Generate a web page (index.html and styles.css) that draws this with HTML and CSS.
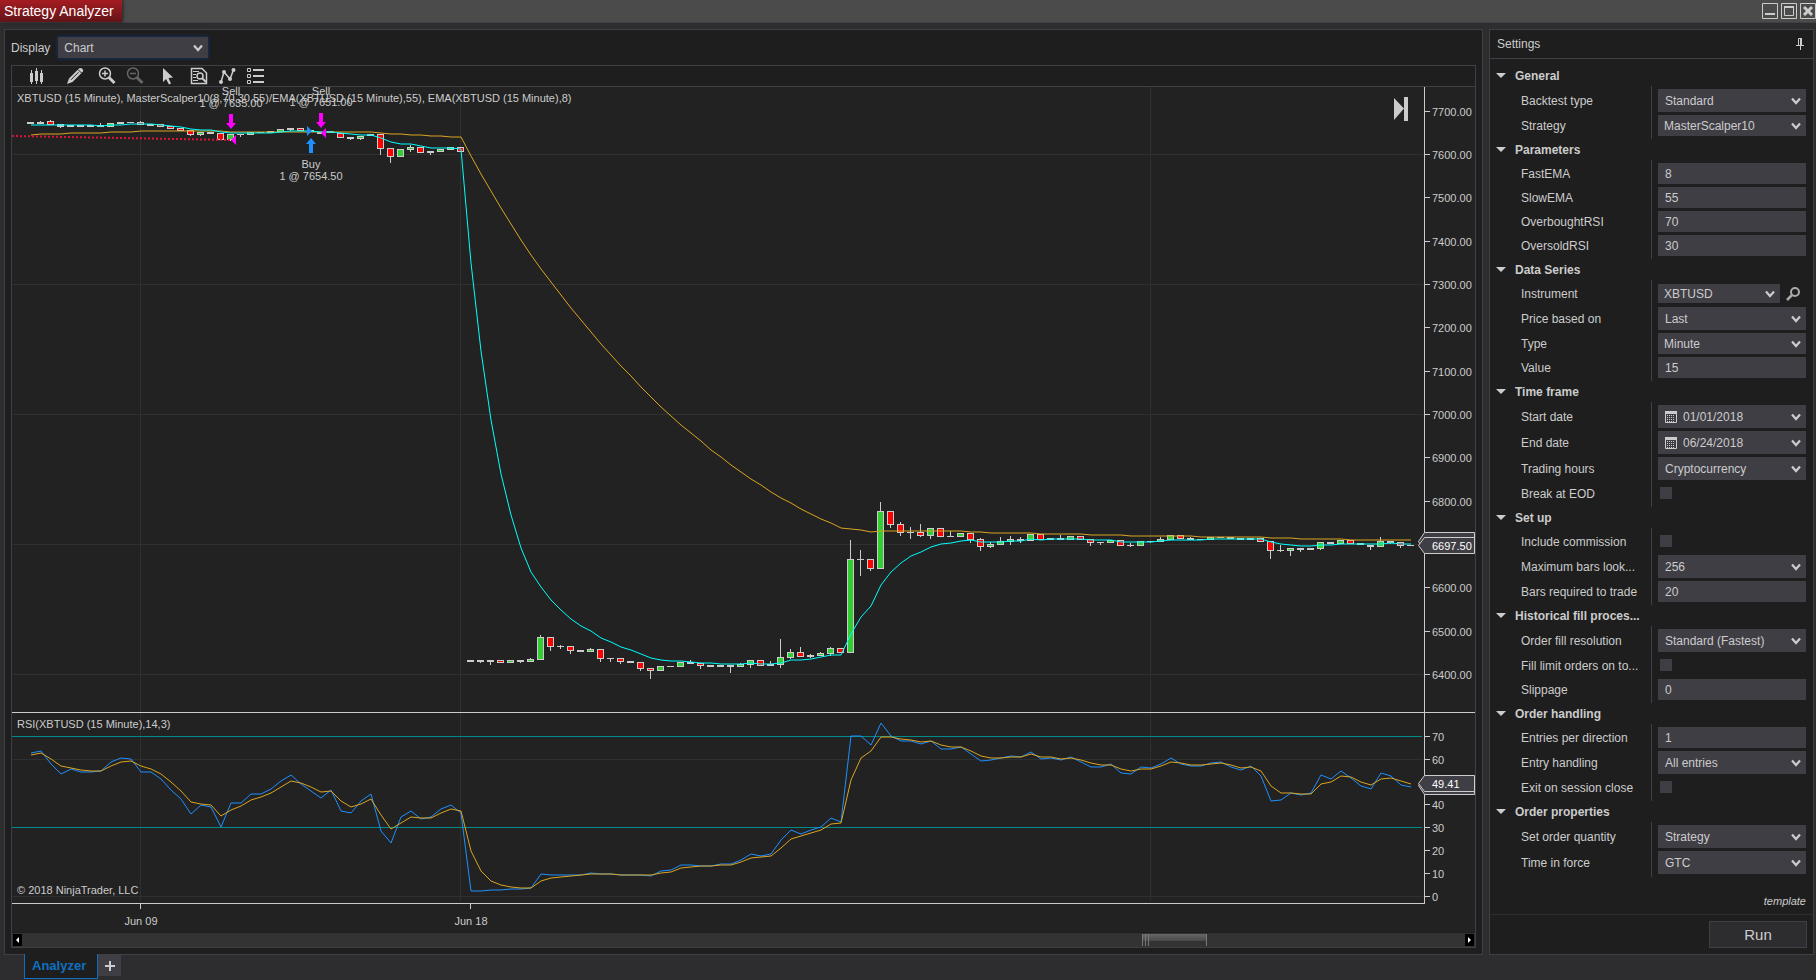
FILE: index.html
```
<!DOCTYPE html>
<html lang="en">
<head>
    <meta charset="UTF-8">
    <title>Strategy Analyzer</title>
    <link rel="stylesheet" href="styles.css">
</head>
<body>
<svg class="defs" aria-hidden="true">
    <symbol id="chev" viewBox="0 0 10 8"><path d="M1 1.5 L5 6 L9 1.5" fill="none" stroke="#ccc" stroke-width="2.2"/></symbol>
    <symbol id="cal" viewBox="0 0 12 12"><path d="M.5.5H11.5V11.5H.5Z" fill="none" stroke="#ccc"/><path d="M0 1.500H12" stroke="#ccc" stroke-width="3"/><path d="M2 4.500H10M2 6.500H10M2 8.500H10M2 10.500H10" stroke="#ccc" stroke-dasharray="1 1"/></symbol>
</svg>

<div class="titlebar">
    <h1>Strategy Analyzer</h1>
    <div class="win-buttons">
        <button type="button" aria-label="Minimize"><svg viewBox="0 0 16 16"><path d="M.5.5H15.5V15.5H.5Z" fill="none" stroke="#ccc"/><path d="M3 11H13" stroke="#ccc" stroke-width="2"/></svg></button>
        <button type="button" aria-label="Maximize"><svg viewBox="0 0 16 16"><path d="M.5.5H15.5V15.5H.5Z" fill="none" stroke="#ccc"/><path d="M3.5 3.5H12.5V12.5H3.5Z" fill="none" stroke="#ccc"/><path d="M3 4H13" stroke="#ccc" stroke-width="2"/></svg></button>
        <button type="button" aria-label="Close"><svg viewBox="0 0 16 16"><path d="M.5.5H15.5V15.5H.5Z" fill="none" stroke="#ccc"/><path d="M4 4L12 12M12 4L4 12" stroke="#ccc" stroke-width="3"/></svg></button>
    </div>
</div>

<div class="content">
    <div class="panel analyzer">
        <div class="display-row">
            <label for="display">Display</label>
            <div class="pick focus"><select id="display"><option>Chart</option></select><svg><use href="#chev"/></svg></div>
        </div>
        <div class="chart-frame">
            <div class="toolbar">
                <div class="group first">
                    <button type="button" aria-label="Bars"><svg viewBox="0 0 18 18"><path d="M3.500 3V17M8.500 1V17M13.500 3V17" stroke="#ccc"/><path d="M2 6H5V15H2ZM7 4H10V14H7ZM12 6H15V15H12Z" fill="#ccc"/></svg></button>
                </div>
                <div class="group">
                    <button type="button" aria-label="Draw"><svg viewBox="0 0 18 18"><path d="M1 17L3 11.500L12.500 2Q14.500 0 16.500 2Q18 4 16 5.500L6.500 15Z" fill="#ccc"/><path d="M5 12.800L12.500 5.300M12 2.500L15.500 6" stroke="#1e1e1e" fill="none"/></svg></button>
                </div>
                <div class="group">
                    <button type="button" aria-label="Zoom in"><svg viewBox="0 0 18 18"><circle cx="7" cy="6.500" r="5.500" fill="none" stroke="#ccc" stroke-width="1.500"/><path d="M4 6.500H10M7 3.500V9.500" stroke="#ccc" stroke-width="1.500"/><path d="M11 10.500L16.500 16" stroke="#ccc" stroke-width="3"/></svg></button>
                    <button type="button" aria-label="Zoom out" disabled><svg viewBox="0 0 18 18"><circle cx="7" cy="6.500" r="5.500" fill="none" stroke="#666" stroke-width="1.500"/><path d="M4 6.500H10" stroke="#666" stroke-width="1.500"/><path d="M11 10.500L16.500 16" stroke="#666" stroke-width="3"/></svg></button>
                </div>
                <div class="group">
                    <button type="button" aria-label="Pointer"><svg viewBox="0 0 18 18"><path d="M5 1V15L8 12L11 17.500L13 16.500L10.500 11L15 10.500Z" fill="#ccc"/></svg></button>
                </div>
                <div class="group">
                    <button type="button" aria-label="Data box"><svg viewBox="0 0 18 18"><path d="M1.500 1.500H12L16.500 6V16.500H1.500Z" fill="none" stroke="#ccc" stroke-width="1.500"/><path d="M3 4.500H9M3 7.500H6M3 10.500H6M3 13.500H8" stroke="#ccc"/><circle cx="10" cy="9" r="3" fill="none" stroke="#ccc" stroke-width="1.500"/><path d="M12 11L16 15" stroke="#ccc" stroke-width="2"/></svg></button>
                    <button type="button" aria-label="Indicators"><svg viewBox="0 0 18 18"><path d="M3 15L6 5L12 12L15.500 3" fill="none" stroke="#ccc" stroke-width="1.500"/><g fill="#ccc"><circle cx="3" cy="15" r="2"/><circle cx="6" cy="5" r="2"/><circle cx="12" cy="12" r="2"/><circle cx="15.500" cy="3" r="2"/></g></svg></button>
                    <button type="button" aria-label="Properties"><svg viewBox="0 0 18 18"><path d="M1.500 1.500H4.500V4.500H1.500ZM1.500 7.500H4.500V10.500H1.500ZM1.500 13.500H4.500V16.500H1.500Z" fill="none" stroke="#ccc"/><path d="M7 3H18M7 9H18M7 15H18" stroke="#ccc" stroke-width="2"/></svg></button>
                </div>
            </div>
            <svg id="chart" class="chart" viewBox="12 87 1463 845">
                <g id="grid"></g>
                <g id="candles"></g>
                <g id="lines"></g>
                <g id="axes"></g>
                <path d="M12 136L231 140" stroke="#dc143c" stroke-width="2" stroke-dasharray="2 2"/>
                <g fill="#f0f">
                    <path d="M229 114H233V123H236L231 129L226 123H229Z"/>
                    <path d="M319 113H323V122H326L321 128L316 122H319Z"/>
                    <path d="M236 135V145L231 140Z"/>
                    <path d="M326 128V138L321 133Z"/>
                </g>
                <g fill="#1e90ff">
                    <path d="M309 153H313V144H316L311 138L306 144H309Z"/>
                    <path d="M307 126V136L312 131Z"/>
                </g>
                <g class="chart-text">
                    <text x="17" y="102">XBTUSD (15 Minute), MasterScalper10(8,70,30,55)/EMA(XBTUSD (15 Minute),55), EMA(XBTUSD (15 Minute),8)</text>
                    <g text-anchor="middle">
                        <text x="231" y="95">Sell</text>
                        <text x="231" y="107">1 @ 7635.00</text>
                        <text x="321" y="95">Sell</text>
                        <text x="321" y="106">1 @ 7651.00</text>
                        <text x="311" y="168">Buy</text>
                        <text x="311" y="180">1 @ 7654.50</text>
                        <text x="141" y="925">Jun 09</text>
                        <text x="471" y="925">Jun 18</text>
                    </g>
                    <text x="17" y="728">RSI(XBTUSD (15 Minute),14,3)</text>
                    <text x="17" y="894">© 2018 NinjaTrader, LLC</text>
                </g>
                <path d="M1394 98L1404 108.500L1394 120ZM1404 97H1408V121H1404Z" fill="#ccc"/>
                <g fill="#3f3e45" stroke="#ccc">
                    <path d="M1418.500 541.500L1424.500 532.500H1474.500V551.500H1424.500Z"/>
                    <path d="M1418.500 545.500L1424.500 537.500H1474.500V553.500H1424.500Z"/>
                    <path d="M1418.500 785.500L1424.500 777.500H1474.500V794.500H1424.500Z"/>
                    <path d="M1418.500 783.500L1424.500 775.500H1474.500V791.500H1424.500Z"/>
                </g>
                <g class="chart-text marker">
                    <text x="1432" y="550">6697.50</text>
                    <text x="1432" y="788">49.41</text>
                </g>
            </svg>
            <div class="scrollbar">
                <button type="button" aria-label="Scroll left"><svg viewBox="0 0 9 12"><path d="M6 3V9L3 6Z" fill="#fff"/></svg></button>
                <div class="track"><div class="thumb"></div></div>
                <button type="button" aria-label="Scroll right"><svg viewBox="0 0 9 12"><path d="M3 3V9L6 6Z" fill="#fff"/></svg></button>
            </div>
        </div>
    </div>

    <div class="panel settings">
        <div class="settings-title"><h2>Settings</h2>
            <button type="button" aria-label="Pin"><svg viewBox="0 0 8 12"><path d="M2.500 7V.5H5.500V7M0 7.500H8M4.500 8V12" fill="none" stroke="#ccc"/><path d="M5 0V7" stroke="#ccc" stroke-width="2"/></svg></button>
        </div>
        <form class="settings-list">
            <h3>General</h3>
            <div class="rows">
                <div class="row"><label for="backtest">Backtest type</label><div class="pick tall"><select id="backtest"><option>Standard</option></select><svg><use href="#chev"/></svg></div></div>
                <div class="row"><label for="strategy">Strategy</label><div class="pick slim"><select id="strategy"><option>MasterScalper10</option></select><svg><use href="#chev"/></svg></div></div>
            </div>
            <h3>Parameters</h3>
            <div class="rows">
                <div class="row"><label for="fast">FastEMA</label><input type="text" id="fast" value="8"></div>
                <div class="row"><label for="slow">SlowEMA</label><input type="text" id="slow" value="55"></div>
                <div class="row"><label for="overbought">OverboughtRSI</label><input type="text" id="overbought" value="70"></div>
                <div class="row"><label for="oversold">OversoldRSI</label><input type="text" id="oversold" value="30"></div>
            </div>
            <h3>Data Series</h3>
            <div class="rows">
                <div class="row"><label for="instrument">Instrument</label>
                    <div class="instrument">
                        <div class="pick slim"><select id="instrument"><option>XBTUSD</option></select><svg><use href="#chev"/></svg></div>
                        <button type="button" aria-label="Find instrument"><svg viewBox="0 0 14 14"><circle cx="9" cy="5" r="4" fill="none" stroke="#aaa" stroke-width="2"/><path d="M6 8L1 13" stroke="#aaa" stroke-width="2.500"/></svg></button>
                    </div>
                </div>
                <div class="row"><label for="price">Price based on</label><div class="pick tall"><select id="price"><option>Last</option></select><svg><use href="#chev"/></svg></div></div>
                <div class="row"><label for="type">Type</label><div class="pick slim"><select id="type"><option>Minute</option></select><svg><use href="#chev"/></svg></div></div>
                <div class="row"><label for="value">Value</label><input type="text" id="value" value="15"></div>
            </div>
            <h3>Time frame</h3>
            <div class="rows">
                <div class="row"><label for="start">Start date</label><div class="pick tall date"><svg class="cal"><use href="#cal"/></svg><select id="start"><option>01/01/2018</option></select><svg><use href="#chev"/></svg></div></div>
                <div class="row"><label for="end">End date</label><div class="pick tall date"><svg class="cal"><use href="#cal"/></svg><select id="end"><option>06/24/2018</option></select><svg><use href="#chev"/></svg></div></div>
                <div class="row"><label for="hours">Trading hours</label><div class="pick tall"><select id="hours"><option>Cryptocurrency</option></select><svg><use href="#chev"/></svg></div></div>
                <div class="row"><label for="eod">Break at EOD</label><input type="checkbox" id="eod"></div>
            </div>
            <h3>Set up</h3>
            <div class="rows">
                <div class="row"><label for="commission">Include commission</label><input type="checkbox" id="commission"></div>
                <div class="row"><label for="lookback">Maximum bars look...</label><div class="pick tall"><select id="lookback"><option>256</option></select><svg><use href="#chev"/></svg></div></div>
                <div class="row"><label for="required">Bars required to trade</label><input type="text" id="required" value="20"></div>
            </div>
            <h3>Historical fill proces...</h3>
            <div class="rows">
                <div class="row"><label for="resolution">Order fill resolution</label><div class="pick tall"><select id="resolution"><option>Standard (Fastest)</option></select><svg><use href="#chev"/></svg></div></div>
                <div class="row"><label for="limit">Fill limit orders on to...</label><input type="checkbox" id="limit"></div>
                <div class="row"><label for="slippage">Slippage</label><input type="text" id="slippage" value="0"></div>
            </div>
            <h3>Order handling</h3>
            <div class="rows">
                <div class="row"><label for="entries">Entries per direction</label><input type="text" id="entries" value="1"></div>
                <div class="row"><label for="handling">Entry handling</label><div class="pick tall"><select id="handling"><option>All entries</option></select><svg><use href="#chev"/></svg></div></div>
                <div class="row"><label for="exit">Exit on session close</label><input type="checkbox" id="exit"></div>
            </div>
            <h3>Order properties</h3>
            <div class="rows">
                <div class="row"><label for="quantity">Set order quantity</label><div class="pick tall"><select id="quantity"><option>Strategy</option></select><svg><use href="#chev"/></svg></div></div>
                <div class="row"><label for="tif">Time in force</label><div class="pick tall"><select id="tif"><option>GTC</option></select><svg><use href="#chev"/></svg></div></div>
            </div>
            <a href="#" class="template">template</a>
        </form>
        <div class="run-bar"><button type="button">Run</button></div>
    </div>
</div>

<div class="tabs">
    <a href="#" class="tab">Analyzer</a>
    <button type="button" aria-label="New tab"><svg viewBox="0 0 10 10"><path d="M5 0V10M0 5H10" stroke="#ccc" stroke-width="2"/></svg></button>
</div>
<script src="chart.js"></script>
</body>
</html>
```

FILE: styles.css
```
* {
    box-sizing: border-box;
}
body {
    margin: 0;
    min-height: 100vh;
    display: flex;
    flex-direction: column;
    background: #2d2d30;
    color: #ccc;
    font-family: "Liberation Sans", Arial, sans-serif;
    font-size: 12px;
}
h1, h2, h3 {
    margin: 0;
    font-weight: normal;
}
button {
    padding: 0;
    border: 0;
    background: none;
    color: inherit;
    font-family: inherit;
}
svg {
    display: block;
}
.defs {
    position: absolute;
    width: 0;
    height: 0;
}

/* title bar */
.titlebar {
    display: flex;
    justify-content: space-between;
    height: 23px;
    background: #4b4b4b;
    border-bottom: 1px solid #3f3f46;
}
.titlebar h1 {
    padding: 0 8px 0 4px;
    font-size: 14px;
    line-height: 22px;
    color: #fff;
    background: linear-gradient(#a51c22, #631418);
    box-shadow: 1px 0 3px #222;
}
.win-buttons {
    display: flex;
    align-items: flex-start;
    gap: 3px;
    padding-top: 3px;
}
.win-buttons svg {
    width: 16px;
    height: 16px;
}

/* layout */
.content {
    flex: 1;
    display: grid;
    grid-template-columns: minmax(0, 1fr) 325px;
    gap: 6px;
    padding: 6px 2px 0 4px;
}
.panel {
    display: flex;
    flex-direction: column;
    background: #1e1e1e;
    border: 1px solid #3f3f46;
}
.analyzer {
    padding: 0 6px 6px;
}
.display-row {
    display: flex;
    align-items: center;
    gap: 8px;
    height: 35px;
}
.display-row .pick {
    width: 150px;
}

/* drop-downs and inputs */
.pick {
    position: relative;
    height: 21px;
    background: #3f3e45;
}
.pick.tall {
    height: 23px;
}
.pick.focus {
    box-shadow: 0 0 4px #0e3a7a;
}
.pick select {
    appearance: none;
    width: 100%;
    height: 100%;
    padding: 0 20px 0 6px;
    border: 0;
    background: none;
    color: #ccc;
    font-family: inherit;
    font-size: 12px;
}
.pick.tall select {
    padding-left: 7px;
}
.pick.date select {
    padding-left: 25px;
}
.pick svg {
    position: absolute;
    right: 5px;
    top: 0;
    bottom: 0;
    margin: auto;
    width: 10px;
    height: 8px;
    pointer-events: none;
}
.pick svg.cal {
    left: 7px;
    right: auto;
    width: 12px;
    height: 12px;
}
input[type=text] {
    width: 100%;
    height: 21px;
    padding: 0 7px;
    border: 0;
    background: #3f3e45;
    color: #ccc;
    font-family: inherit;
    font-size: 12px;
}
input[type=checkbox] {
    appearance: none;
    width: 12px;
    height: 12px;
    margin: 4px 2px 5px;
    background: #3f3e45;
}

/* chart */
.chart-frame {
    flex: 1;
    display: flex;
    flex-direction: column;
    border: 1px solid #3f3f46;
    background: #222;
}
.toolbar {
    display: flex;
    gap: 14px;
    height: 21px;
    padding-left: 13px;
    align-items: center;
    background: #1e1e1e;
    border-bottom: 1px solid #3f3f46;
}
.toolbar .group {
    display: flex;
    gap: 10px;
}
.toolbar .first {
    padding: 0 6px 0 3px;
}
.toolbar svg {
    width: 18px;
    height: 18px;
}
.chart {
    flex: 1;
    width: 100%;
    min-height: 0;
}
.chart-text {
    fill: #ccc;
    font-size: 11px;
}
.marker {
    fill: #fff;
}
.scrollbar {
    display: flex;
    height: 15px;
    padding: 1px;
    background: #333;
    border-top: 1px solid #1e1e1e;
}
.scrollbar button {
    background: #000;
}
.scrollbar button svg {
    width: 9px;
    height: 12px;
}
.track {
    flex: 1;
}
.thumb {
    width: 4.5%;
    height: 100%;
    margin-left: 77.6%;
    border: 1px solid #777;
    border-width: 0 1px;
    background: linear-gradient(90deg, transparent 2px, #777 2px, #777 3px, transparent 3px, transparent 5px, #777 5px, #777 6px, transparent 6px), linear-gradient(#666, #4b4b4b 55%, #333 55%);
}

/* settings */
.settings-title {
    display: flex;
    justify-content: space-between;
    align-items: center;
    height: 29px;
    padding: 0 9px 0 7px;
    border-bottom: 1px solid #3f3f46;
}
.settings-title h2 {
    font-size: 12px;
}
.settings-title svg {
    width: 8px;
    height: 12px;
}
.settings-list {
    flex: 1;
    padding: 6px 7px 0 6px;
    border-bottom: 1px solid #2d2d30;
}
.settings-list h3 {
    display: flex;
    align-items: center;
    gap: 9px;
    height: 21px;
    font-size: 12px;
    font-weight: bold;
}
.settings-list h3::before {
    content: "";
    border: 5px solid transparent;
    border-top-color: #ccc;
    border-bottom: 0;
}
.rows {
    display: grid;
    gap: 3px;
    padding: 3px 0 3px 25px;
    background: linear-gradient(#3f3f46, #3f3f46) 155px 0 / 1px 100% no-repeat;
}
.row {
    display: grid;
    grid-template-columns: 137px minmax(0, 1fr);
    align-items: center;
}
.row label {
    white-space: nowrap;
}
.instrument {
    display: flex;
    align-items: center;
    gap: 6px;
    height: 21px;
}
.instrument .pick {
    width: 122px;
    height: 19px;
}
.instrument button svg {
    width: 14px;
    height: 14px;
}
.template {
    display: block;
    margin-top: 18px;
    text-align: right;
    font-size: 11px;
    font-style: italic;
    color: #ccc;
    text-decoration: none;
}
.run-bar {
    display: flex;
    justify-content: flex-end;
    padding: 6px;
}
.run-bar button {
    width: 98px;
    height: 27px;
    border: 1px solid #3f3f46;
    background: #2d2d30;
    font-size: 15px;
}

/* bottom tabs */
.tabs {
    display: flex;
    align-items: flex-start;
    height: 25px;
    padding-left: 24px;
}
.tab {
    height: 25px;
    margin-top: -1px;
    padding: 0 11px 0 7px;
    border: 1px solid #0e70c0;
    border-top: 0;
    background: #1e1e1e;
    color: #0e70c0;
    font-size: 13px;
    font-weight: bold;
    line-height: 24px;
    text-decoration: none;
}
.tabs button {
    width: 23px;
    height: 21px;
    background: #3f3e45;
}
.tabs button svg {
    width: 10px;
    height: 10px;
    margin: auto;
}
```

FILE: chart.js
```
var NS = "http://www.w3.org/2000/svg";
function my$(id) {
    return document.getElementById(id);
}
function add(parent, name, attrs, text) {
    var el = document.createElementNS(NS, name);
    for (var k in attrs) el.setAttribute(k, attrs[k]);
    if (text) el.textContent = text;
    my$(parent).appendChild(el);
    return el;
}
function rect(parent, x, y, w, h, fill) {
    add(parent, "rect", {x: x, y: y, width: w, height: h, fill: fill});
}

// one bar per entry: body top, body bottom, colour, wick top, wick bottom
var bars = "122 124 n;122 124 n 121;121 125 r 120;124 127 n 124 128;125 127 n;125 127 n;125 127 n;125 127 n 123;123 127 g;122 124 n;122 123 n;122 125 r 121;124 126 n;124 127 r;126 129 r;128 131 r;130 135 r 130 136;132 135 g 132 136;132 134 n;133 140 r;134 140 g 134 141;134 135 n 134 137;132 135 g;132 133 n;131 133 n;129 132 g;128 130 n 128 131;128 131 r;130 132 r;132 134 n;131 133 n;133 138 r;137 139 n 137 140;136 139 g 136 140;134 136 n;134 149 r 134 155;148 157 r 148 163;149 157 g;147 150 g 145 152;147 153 r;151 153 n 151 155;149 152 g;147 150 g;147 152 r;" +
    "660 662 n;660 662 n 660 663;660 662 n 660 665;660 663 r;660 663 g;660 662 n 660 663;659 662 g 658;637 660 g 635;637 647 r 637 651;646 647 n 645 649;646 651 r 646 654;650 652 n;649 652 g 648;649 659 r 649 662;658 659 n 658 662;658 662 r 658 664;661 663 n;662 669 r 662 671;668 671 r 668 679;666 671 g;666 667 n;662 667 g;662 664 n 660;663 666 r 663 669;665 667 n;665 667 n;665 667 n 665 673;664 667 g 663;660 665 g 660 668;660 666 r;664 666 n 661;657 665 g 639 668;652 658 g 649 659;652 657 r 647;655 657 n 654 658;653 656 g 652;648 654 g 647 656;648 653 r;" +
    "559 653 g 540;559 560 n 550 576;559 569 r 559 571;511 569 g 502;511 525 r 511 528;524 533 r 522 536;532 533 n 527 539;532 536 r 524 537;528 536 g 528 539;528 537 r;536 537 n 531;533 537 g;533 540 r 533 543;539 547 r 538 551;544 547 g 542 548;541 545 g 537;539 542 g 536 545;539 541 n 537 543;534 541 g;534 540 r;538 540 n;538 540 n 535;536 540 g;536 540 r;539 543 r 539 546;542 543 n 542 545;540 543 g;540 546 r;545 546 n 543 547;541 546 g;541 542 n 541 543;539 542 g 537;535 540 g;535 539 r;538 540 n 537;539 540 n;537 540 g;537 538 n;537 539 n;538 540 n;538 540 n;538 542 r;541 551 r 541 559;550 551 n 545 552;548 551 g 548 556;548 550 n 548 552;548 550 n;542 549 g 542 550;542 544 n;540 544 g;540 544 r;543 545 n;545 547 n 545 550;541 547 g 537;541 543 n 541 544;542 546 r 542 548;545 546 n";
var rsi = [753,751,764,774,769,772,772,771,762,758,759,772,772,779,790,799,814,805,807,827,803,803,794,794,789,781,775,784,791,798,790,811,813,801,794,831,843,817,811,819,817,809,805,813,
    891,891,890,890,889,889,888,874,875,875,875,875,873,874,874,875,875,875,876,871,870,865,865,866,866,864,864,860,854,856,854,840,830,834,830,827,818,822,
    736,736,745,723,736,741,741,744,741,749,749,747,754,761,760,758,756,757,752,759,758,760,757,762,767,767,764,773,774,767,768,764,758,764,766,766,763,762,767,770,766,776,801,800,793,795,793,775,779,771,778,786,789,773,776,785,787];

// grid
[140, 460, 1150].forEach(function (x) { rect("grid", x, 87, 1, 814, "#303030"); });
[154, 284, 414, 544, 674, 759, 896].forEach(function (y) { rect("grid", 13, y, 1410, 1, "#303030"); });
[736, 827].forEach(function (y) { rect("grid", 12, y, 1410, 1, "#008b8b"); });

// candles
var closes = bars.split(";").map(function (s, i) {
    var p = s.split(" ");
    var top = +p[0], bottom = +p[1], x = 27 + 10 * i;
    var high = p[3] ? +p[3] : top, low = p[4] ? +p[4] : bottom;
    if (low > high) rect("candles", x + 3, high, 1, low - high, "#ccc");
    rect("candles", x, top, 7, bottom - top, "#ccc");
    if (p[2] !== "n") rect("candles", x + 1, top + 1, 5, bottom - top - 2, p[2] === "r" ? "#f00" : "#32cd32");
    return p[2] === "r" ? bottom : p[2] === "g" ? top : (top + bottom) / 2;
});

// exponential moving average, drawn on whole pixels
function ema(values, period, start) {
    var k = 2 / (period + 1), last = start;
    return values.map(function (v, i) {
        if (i) last += (v - last) * k;
        return last;
    });
}
function line(values, color) {
    var pts = values.map(function (y, i) { return (31 + 10 * i) + "," + Math.round(y); });
    add("lines", "polyline", {points: pts.join(" "), fill: "none", stroke: color});
}
line(ema(closes, 55, 134.7), "#daa520");
line(ema(closes, 8, 125), "#00ffff");
line(rsi, "#1e90ff");
line(ema(rsi, 3, 755), "#daa520");

// axes
rect("axes", 1424, 87, 1, 817, "#ccc");
rect("axes", 12, 712, 1463, 1, "#ccc");
rect("axes", 12, 903, 1413, 1, "#ccc");
[140, 470].forEach(function (x) { rect("axes", x, 903, 1, 6, "#ccc"); });
function tick(y, label) {
    rect("axes", 1425, y, 5, 1, "#ccc");
    add("axes", "text", {x: 1432, y: y + 5, "class": "chart-text"}, label);
}
for (var p = 7700; p >= 6400; p -= 100) {
    if (p !== 6700) tick(Math.floor(111 + (7700 - p) * 0.4334), p + ".00");
}
[70, 60, 40, 30, 20, 10, 0].forEach(function (v) { tick(Math.floor(896 - v * 2.28), String(v)); });
```
